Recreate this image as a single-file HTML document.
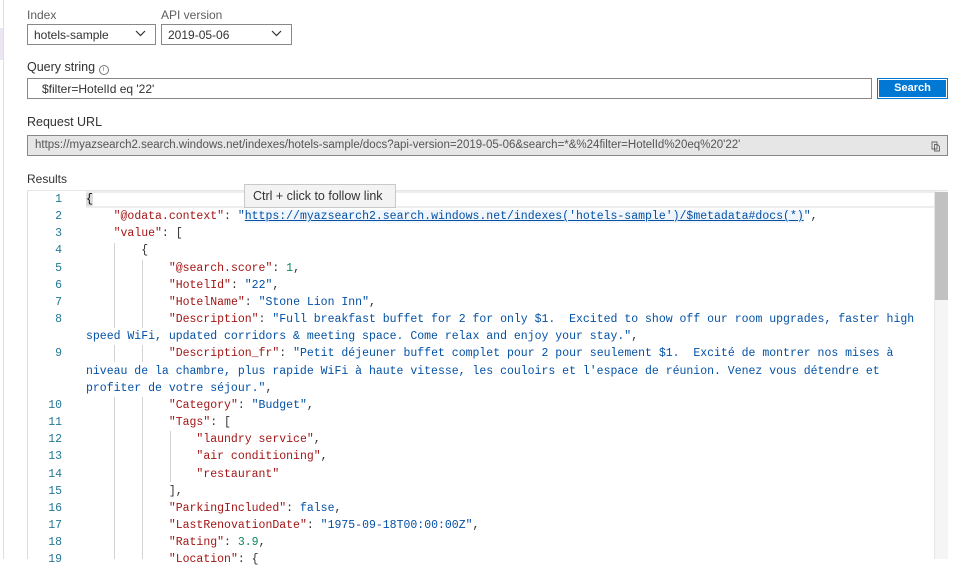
<!DOCTYPE html>
<html><head><meta charset="utf-8"><style>
*{margin:0;padding:0;box-sizing:border-box}
body{width:972px;height:559px;overflow:hidden;background:#fff;font-family:"Liberation Sans",sans-serif;position:relative;color:#323130}
.a{position:absolute}
.lbl{font-size:12px;color:#605e5c}
.sel{border:1px solid #8a8886;height:21px;font-size:12px;padding:3px 0 0 6px;color:#323130}
.chev{position:absolute;right:9px;top:4px}
.code{font-family:"Liberation Mono",monospace;font-size:11.5px;white-space:pre;line-height:17.15px}
.k{color:#a31515}.s{color:#0451a5}.n{color:#098658}.p{color:#000}
.ln{position:absolute;left:28px;width:34px;text-align:right;color:#237893;font-family:"Liberation Mono",monospace;font-size:11.5px}
.g{position:absolute;width:1px;background:#d3d3d3}
</style></head><body>
<div class="a" style="left:3px;top:0;width:1px;height:559px;background:#e1dfdd"></div>
<div class="a" style="left:0;top:28px;width:3px;height:32px;background:#ece6f3"></div>

<div class="a lbl" style="left:27px;top:8px">Index</div>
<div class="a lbl" style="left:161px;top:8px">API version</div>
<div class="a sel" style="left:27px;top:24px;width:129px">hotels-sample<svg class="chev" width="11" height="8" viewBox="0 0 11 8"><path d="M1 2l4.5 4.5L10 2" fill="none" stroke="#323130" stroke-width="1.2"/></svg></div>
<div class="a sel" style="left:161px;top:24px;width:131px">2019-05-06<svg class="chev" width="11" height="8" viewBox="0 0 11 8"><path d="M1 2l4.5 4.5L10 2" fill="none" stroke="#323130" stroke-width="1.2"/></svg></div>

<div class="a" style="left:27px;top:60px;font-size:12.5px">Query string <span style="display:inline-block;width:10px;height:10px;border:1px solid #777;border-radius:50%;font-size:7px;text-align:center;line-height:8px;color:#777;vertical-align:0">i</span></div>
<div class="a sel" style="left:27px;top:78px;width:845px;padding-left:14px">$filter=HotelId eq '22'</div>
<div class="a" style="left:877px;top:78px;width:71px;height:21px;background:#0078d4;border:1px solid #0078d4"><div style="border:1px solid #fff;height:19px;color:#fff;font-size:11px;font-weight:bold;text-align:center;line-height:16px">Search</div></div>

<div class="a" style="left:27px;top:115px;font-size:12.5px">Request URL</div>
<div class="a sel" style="left:27px;top:135px;width:921px;height:21px;background:#e6e6e6;color:#555;padding-left:7px;font-size:11.5px">https://myazsearch2.search.windows.net/indexes/hotels-sample/docs?api-version=2019-05-06&amp;search=*&amp;%24filter=HotelId%20eq%20'22'
<svg class="a" style="right:6px;top:5px" width="10" height="11" viewBox="0 0 10 11"><path d="M1 1h5v7H1z M3.5 3.5h3l2 2V10h-5z" fill="none" stroke="#666" stroke-width="0.9"/></svg></div>

<div class="a" style="left:27px;top:172px;font-size:12px">Results</div>

<div class="a" style="left:27px;top:190px;width:921px;height:369px;border-left:1px solid #ddd;border-top:1px solid #e6e6e6"></div>
<div class="a" style="left:86px;top:191px;width:848px;height:17px;border-top:2px solid #eee;border-bottom:2px solid #eee"></div>
<div class="a" style="left:934px;top:191px;width:14px;height:368px;background:#f5f5f5;border-left:1px solid #e6e6e6"></div>
<div class="a" style="left:935px;top:192px;width:13px;height:108px;background:#c1c1c1"></div>

<div class="g" style="left:114px;top:243px;height:85px"></div>
<div class="g" style="left:142px;top:260px;height:68px"></div>
<div class="g" style="left:114px;top:345px;height:17px"></div>
<div class="g" style="left:142px;top:345px;height:17px"></div>
<div class="g" style="left:114px;top:397px;height:162px"></div>
<div class="g" style="left:142px;top:397px;height:162px"></div>
<div class="g" style="left:170px;top:431px;height:51px"></div>

<div class="ln" style="top:191px;line-height:17.15px">1<br>2<br>3<br>4<br>5<br>6<br>7<br>8<br><br>9<br><br><br>10<br>11<br>12<br>13<br>14<br>15<br>16<br>17<br>18<br>19</div>

<div class="a code" style="left:86px;top:191px"><span class="p" style="background:#ddd">{</span>
    <span class="k">"@odata.context"</span>: <span class="s">"<span style="text-decoration:underline;background:#f0f6fc">https://myazsearch2.search.windows.net/indexes('hotels-sample')/$metadata#docs(*)</span>"</span>,
    <span class="k">"value"</span>: [
        {
            <span class="k">"@search.score"</span>: <span class="n">1</span>,
            <span class="k">"HotelId"</span>: <span class="s">"22"</span>,
            <span class="k">"HotelName"</span>: <span class="s">"Stone Lion Inn"</span>,
            <span class="k">"Description"</span>: <span class="s">"Full breakfast buffet for 2 for only $1.  Excited to show off our room upgrades, faster high
speed WiFi, updated corridors &amp; meeting space. Come relax and enjoy your stay."</span>,
            <span class="k">"Description_fr"</span>: <span class="s">"Petit déjeuner buffet complet pour 2 pour seulement $1.  Excité de montrer nos mises à
niveau de la chambre, plus rapide WiFi à haute vitesse, les couloirs et l'espace de réunion. Venez vous détendre et
profiter de votre séjour."</span>,
            <span class="k">"Category"</span>: <span class="s">"Budget"</span>,
            <span class="k">"Tags"</span>: [
                <span class="k">"laundry service"</span>,
                <span class="k">"air conditioning"</span>,
                <span class="k">"restaurant"</span>
            ],
            <span class="k">"ParkingIncluded"</span>: <span class="s">false</span>,
            <span class="k">"LastRenovationDate"</span>: <span class="s">"1975-09-18T00:00:00Z"</span>,
            <span class="k">"Rating"</span>: <span class="n">3.9</span>,
            <span class="k">"Location"</span>: {</div>

<div class="a" style="left:244px;top:184px;width:152px;height:24px;background:#f3f3f3;border:1px solid #c8c8c8;font-size:12.5px;color:#333;line-height:22px;padding-left:8px">Ctrl + click to follow link</div>
</body></html>
